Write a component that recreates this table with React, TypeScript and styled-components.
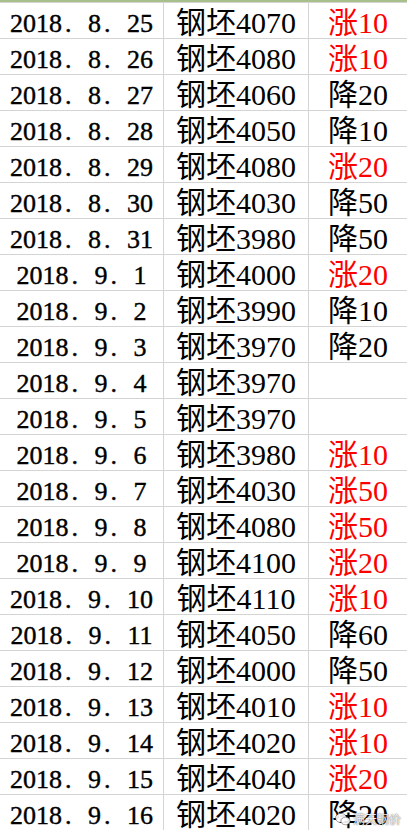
import React from "react";
import styled, { createGlobalStyle } from "styled-components";

const Global = createGlobalStyle`
  html, body { margin: 0; padding: 0; background: #ffffff; }
  body { overflow: hidden; }
`;

type Row = { date: string; price: string; change: string };

const rows: Row[] = [
  { date: "2018.8.25", price: "4070", change: "涨10" },
  { date: "2018.8.26", price: "4080", change: "涨10" },
  { date: "2018.8.27", price: "4060", change: "降20" },
  { date: "2018.8.28", price: "4050", change: "降10" },
  { date: "2018.8.29", price: "4080", change: "涨20" },
  { date: "2018.8.30", price: "4030", change: "降50" },
  { date: "2018.8.31", price: "3980", change: "降50" },
  { date: "2018.9.1", price: "4000", change: "涨20" },
  { date: "2018.9.2", price: "3990", change: "降10" },
  { date: "2018.9.3", price: "3970", change: "降20" },
  { date: "2018.9.4", price: "3970", change: "" },
  { date: "2018.9.5", price: "3970", change: "" },
  { date: "2018.9.6", price: "3980", change: "涨10" },
  { date: "2018.9.7", price: "4030", change: "涨50" },
  { date: "2018.9.8", price: "4080", change: "涨50" },
  { date: "2018.9.9", price: "4100", change: "涨20" },
  { date: "2018.9.10", price: "4110", change: "涨10" },
  { date: "2018.9.11", price: "4050", change: "降60" },
  { date: "2018.9.12", price: "4000", change: "降50" },
  { date: "2018.9.13", price: "4010", change: "涨10" },
  { date: "2018.9.14", price: "4020", change: "涨10" },
  { date: "2018.9.15", price: "4040", change: "涨20" },
  { date: "2018.9.16", price: "4020", change: "降20" },
];

const Sheet = styled.div`
  position: relative;
  width: 407px;
  height: 830px;
  overflow: hidden;
  background: #ffffff;
`;

const TopEdge = styled.div`
  height: 2px;
  background: #a7bf8a;
  border-bottom: 1px solid #d4d4d4;
  box-sizing: content-box;
`;

const RowLine = styled.div`
  display: grid;
  grid-template-columns: 164px 145px 98px;
  height: 36px;
  box-sizing: border-box;
  border-bottom: 1px solid #d4d4d4;
`;

const Cell = styled.div<{ $size: number; $red?: boolean; $last?: boolean }>`
  display: flex;
  align-items: flex-end;
  justify-content: center;
  box-sizing: border-box;
  border-right: ${(p) => (p.$last ? "none" : "1px solid #d4d4d4")};
  padding-bottom: 0;
  font-family: "Liberation Serif", "Noto Sans CJK SC", serif;
  font-size: ${(p) => p.$size}px;
  line-height: 1;
  color: ${(p) => (p.$red ? "#ff0000" : "#000000")};
  white-space: nowrap;
`;

const DateText = styled.span`
  font-size: 26px;
  -webkit-text-stroke: 0.4px #000;
  padding-bottom: 1px;
`;

const Dot = styled.span`
  display: inline-block;
  width: 23px;
  padding-left: 3px;
  text-align: left;
`;

function DateLabel({ value }: { value: string }) {
  const parts = value.split(".");
  return (
    <DateText>
      {parts.map((p, i) => (
        <React.Fragment key={i}>
          {p}
          {i < parts.length - 1 && <Dot>.</Dot>}
        </React.Fragment>
      ))}
    </DateText>
  );
}

const Watermark = styled.div`
  position: absolute;
  right: 6px;
  bottom: 3px;
  display: flex;
  align-items: center;
  gap: 2px;
  font-family: "Noto Sans CJK SC", sans-serif;
  font-size: 12px;
  color: rgba(255, 255, 255, 0.92);
  text-shadow: 0 0 1px rgba(0, 0, 0, 0.55), 0 0 2px rgba(0, 0, 0, 0.35);
`;

export default function App() {
  return (
    <Sheet>
      <Global />
      <TopEdge />
      {rows.map((r) => (
        <RowLine key={r.date}>
          <Cell $size={25}>
            <DateLabel value={r.date} />
          </Cell>
          <Cell $size={30}>钢坯{r.price}</Cell>
          <Cell $size={30} $last $red={r.change.startsWith("涨")}>
            {r.change}
          </Cell>
        </RowLine>
      ))}
      <Watermark>
        <svg width="16" height="14" viewBox="0 0 16 14">
          <ellipse cx="6" cy="6" rx="5.5" ry="4.6" fill="rgba(255,255,255,0.9)" stroke="rgba(0,0,0,0.45)" strokeWidth="0.8" />
          <ellipse cx="10.5" cy="9" rx="4.6" ry="3.8" fill="rgba(255,255,255,0.9)" stroke="rgba(0,0,0,0.45)" strokeWidth="0.8" />
        </svg>
        <span>满天钢价</span>
      </Watermark>
    </Sheet>
  );
}
